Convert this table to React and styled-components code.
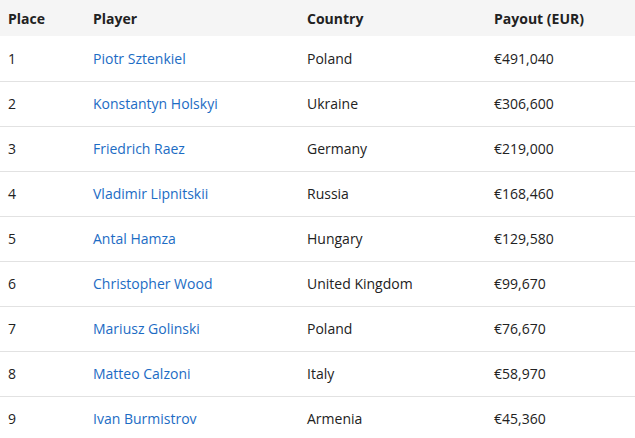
import React from "react";
import styled, { createGlobalStyle } from "styled-components";

const Global = createGlobalStyle`
  html, body { margin: 0; padding: 0; background: #fff; }
  body { font-family: "Open Sans", "Liberation Sans", sans-serif; }
  * { box-sizing: border-box; }
`;

const Table = styled.table`
  width: 635px;
  border-collapse: collapse;
  table-layout: fixed;
  font-size: 14px;
  color: #222;
`;

const HeadRow = styled.tr`
  background: #f5f5f5;
  height: 36px;
`;

const Th = styled.th`
  text-align: left;
  font-weight: 700;
  padding: 0 0 0 8px;
  width: ${(p) => p.$w}px;
  color: #222;
`;

const Row = styled.tr`
  height: 45px;
  border-bottom: 1px solid #e2e2e2;
`;

const Td = styled.td`
  padding: 0 0 0 8px;
  white-space: nowrap;
  overflow: hidden;
`;

const PlayerLink = styled.a`
  color: #1c6cc4;
  text-decoration: none;
`;

const rows = [
  [1, "Piotr Sztenkiel", "Poland", "€491,040"],
  [2, "Konstantyn Holskyi", "Ukraine", "€306,600"],
  [3, "Friedrich Raez", "Germany", "€219,000"],
  [4, "Vladimir Lipnitskii", "Russia", "€168,460"],
  [5, "Antal Hamza", "Hungary", "€129,580"],
  [6, "Christopher Wood", "United Kingdom", "€99,670"],
  [7, "Mariusz Golinski", "Poland", "€76,670"],
  [8, "Matteo Calzoni", "Italy", "€58,970"],
  [9, "Ivan Burmistrov", "Armenia", "€45,360"],
];

export default function App() {
  return (
    <>
      <Global />
      <Table>
        <thead>
          <HeadRow>
            <Th $w={85}>Place</Th>
            <Th $w={214}>Player</Th>
            <Th $w={187}>Country</Th>
            <Th $w={149}>Payout (EUR)</Th>
          </HeadRow>
        </thead>
        <tbody>
          {rows.map(([place, name, country, payout]) => (
            <Row key={place}>
              <Td>{place}</Td>
              <Td>
                <PlayerLink href="#">{name}</PlayerLink>
              </Td>
              <Td>{country}</Td>
              <Td>{payout}</Td>
            </Row>
          ))}
        </tbody>
      </Table>
    </>
  );
}
